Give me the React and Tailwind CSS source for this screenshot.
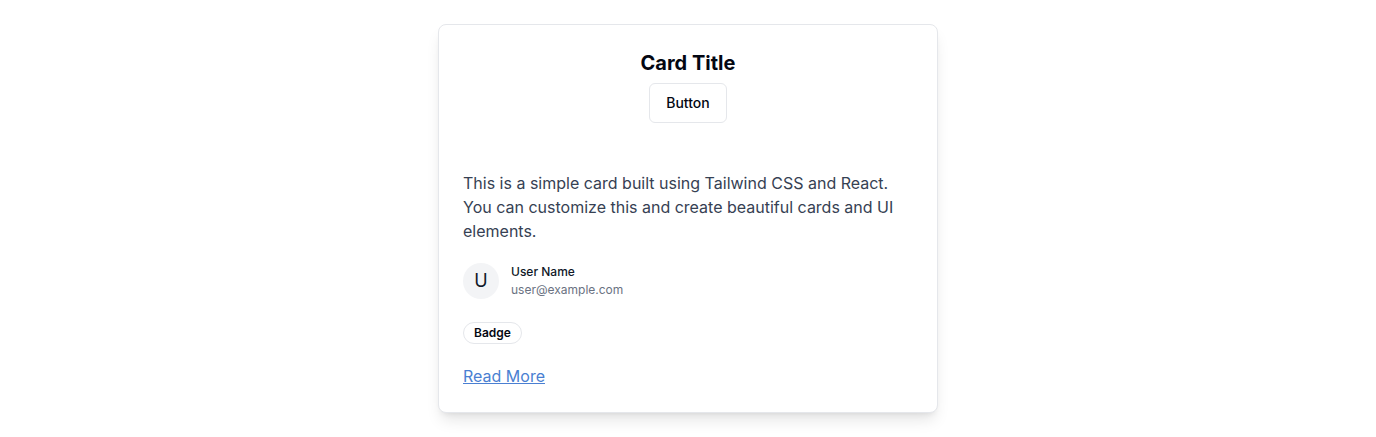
import React from 'react';

const Card = () => {
  return (
    <div className="w-[500px] rounded-lg border border-gray-200 bg-white shadow-lg">
      <div className="flex flex-col items-center px-6 pt-6 pb-6">
        <h2 className="text-xl leading-7 font-bold text-gray-950">Card Title</h2>
        <button className="mt-1.5 h-10 px-4 rounded-md border border-gray-200 bg-white text-sm font-medium text-gray-950">
          Button
        </button>
      </div>

      <div className="flex flex-col items-start px-6 pt-6 pb-6">
        <p className="text-base leading-6 text-gray-700">
          This is a simple card built using Tailwind CSS and React. You can customize this and create
          beautiful cards and UI elements.
        </p>

        <div className="mt-5 flex items-center gap-3">
          <div className="flex h-9 w-9 items-center justify-center rounded-full bg-gray-100 text-lg text-gray-900">
            U
          </div>
          <div className="flex flex-col">
            <span className="text-xs leading-[18px] font-medium text-gray-900">User Name</span>
            <span className="text-xs leading-[18px] text-gray-500">user@example.com</span>
          </div>
        </div>

        <span className="mt-[23px] flex h-[22px] items-center rounded-full border border-gray-200 px-2.5 text-xs font-semibold text-gray-950">
          Badge
        </span>

        <a href="#" className="mt-5 block text-base leading-6 text-[#4a7fd2] underline">
          Read More
        </a>
      </div>
    </div>
  );
};

export default function App() {
  return (
    <div
      className="flex min-h-[437px] items-start justify-center bg-white pt-6"
      style={{ fontFamily: 'Inter, "Noto Sans", sans-serif' }}
    >
      <Card />
    </div>
  );
}
